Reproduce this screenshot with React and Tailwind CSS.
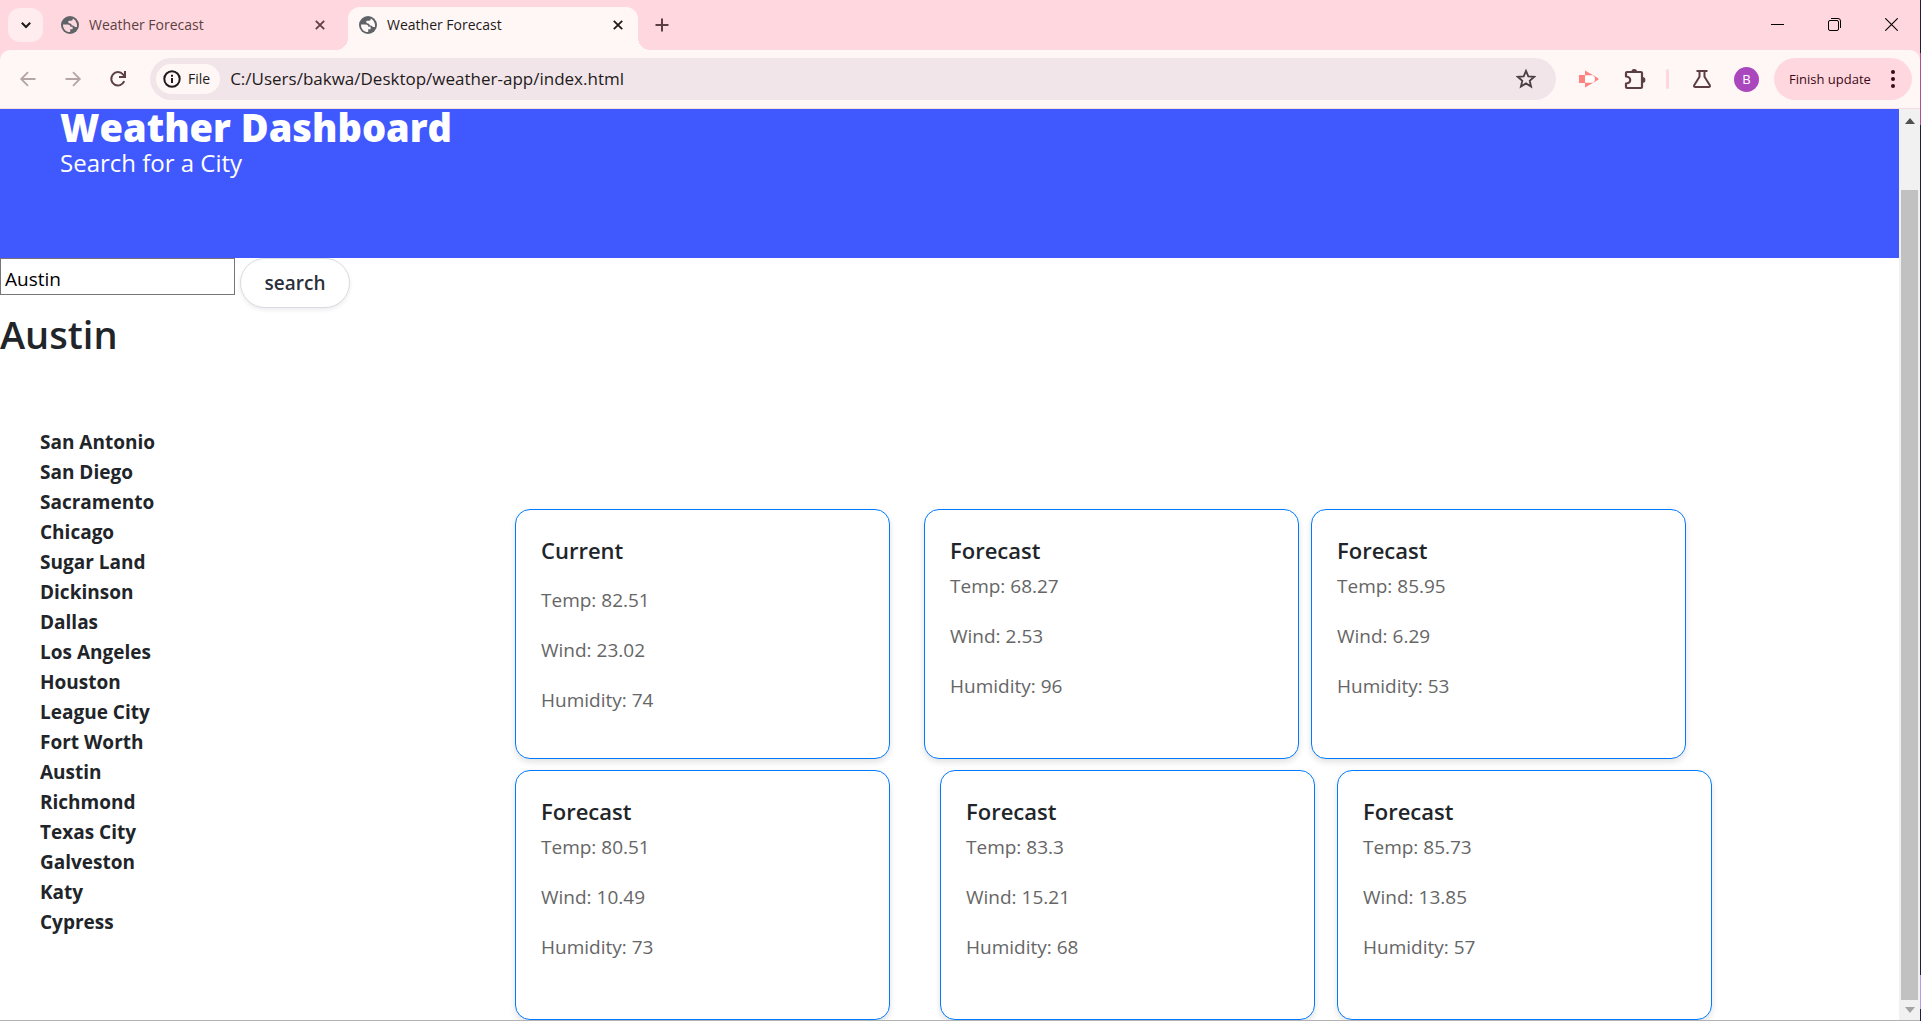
import React from "react";

const cities = [
  "San Antonio", "San Diego", "Sacramento", "Chicago", "Sugar Land", "Dickinson",
  "Dallas", "Los Angeles", "Houston", "League City", "Fort Worth", "Austin",
  "Richmond", "Texas City", "Galveston", "Katy", "Cypress",
];

function Glyph({ d, className, width = 2, box = 20, children }) {
  return (
    <svg viewBox={`0 0 ${box} ${box}`} className={className} fill="none" stroke="currentColor" strokeWidth={width} aria-hidden="true">
      {d && <path d={d} />}
      {children}
    </svg>
  );
}

function Globe({ light }) {
  return (
    <svg viewBox="0 0 18 18" className="size-[18px] shrink-0" aria-hidden="true">
      <circle cx="9" cy="9" r="9" fill="#5f6368" />
      <path
        fill={light}
        d="M2 8.6h4.6c1.6 0 2.6.9 2.8 2.2h2.2v2.4H9.2v2.9C5.2 16.300 2 13 2 9zM11.800 2.600c0 1.500-.6 2.200-1.600 2.200H8.600c-.8 0-1.400.5-1.400 1.300 0 .9.8 1.300 1.800 1.400 1.200.1 1.600.8 1.700 1.900.8.1 1.700-.1 2.300.5.4.5.600 1 1.600 1h1.300c.3-1.300.1-3-.6-4.400-.800-1.900-2-3-3.500-3.900z"
      />
    </svg>
  );
}

function Tab({ active }) {
  return (
    <div className={active
      ? "relative flex h-[43px] w-[290px] items-center rounded-t-xl bg-[#fff7f6] px-[11px] pb-[7px] text-[#1f1a1b]"
      : "flex h-[43px] w-[290px] items-center px-[11px] pb-[7px] text-[#5c3f43]"}>
      {active && <span className="absolute bottom-0 -left-3 size-3 bg-[radial-gradient(circle_at_0_0,transparent_12px,#fff7f6_12px)]" />}
      {active && <span className="absolute -right-3 bottom-0 size-3 bg-[radial-gradient(circle_at_100%_0,transparent_12px,#fff7f6_12px)]" />}
      <Globe light={active ? "#fff7f6" : "#ffd8df"} />
      <span className="ml-[10px] grow text-[14px] leading-[20px]">Weather Forecast</span>
      <button aria-label="Close tab" className="flex size-[18px] items-center justify-center">
        <Glyph box={10} className="size-[10px]" d="M.8.8l8.400 8.400M9.200.8L.8 9.200" width={1.8} />
      </button>
    </div>
  );
}

function TitleBar() {
  return (
    <div className="flex h-[50px] shrink-0 items-end bg-[#ffd8df]">
      <button aria-label="Search tabs" className="mr-[7px] mb-2 ml-2 flex h-[34px] w-[35px] items-center justify-center rounded-xl bg-[#ffecef] text-[#1f1a1b]">
        <Glyph box={10} className="size-[10px]" d="M.8 2.800L5 7l4.200-4.200" width={2} />
      </button>
      <Tab />
      <div className="w-2" />
      <Tab active />
      <button aria-label="New tab" className="mb-[15px] ml-[14px] flex size-5 items-center justify-center text-[#5c3f43]">
        <Glyph box={14} className="size-[14px]" d="M7 .5v13M.5 7h13" width={2} />
      </button>
      <div className="mb-[13px] ml-auto flex pr-[16px] text-black">
        <button aria-label="Minimize" className="mr-[32px] flex size-[25px] items-center justify-center">
          <Glyph box={13} className="size-[13px]" d="M0 6.500h13" width={1} />
        </button>
        <button aria-label="Restore" className="mr-[32px] flex size-[25px] items-center justify-center">
          <Glyph box={13} className="size-[13px]" width={1}>
            <rect x=".5" y="2.500" width="10" height="10" rx="1.500" />
            <path d="M3 .5h7a2.500 2.500 0 0 1 2.500 2.500v7" />
          </Glyph>
        </button>
        <button aria-label="Close" className="flex size-[25px] items-center justify-center">
          <Glyph box={13} className="size-[13px]" d="M.3.3l12.400 12.400M12.700.3L.3 12.700" width={1.1} />
        </button>
      </div>
    </div>
  );
}

function Toolbar() {
  return (
    <div className="shrink-0 bg-[#ffd8df]">
      <div className="flex h-[59px] items-center rounded-t-[10px] border-b border-[#f6dde0] bg-[#fff7f6] pr-2 pl-[18px] text-[#5c3f43]">
        <button aria-label="Back" className="text-[#b5a5a6]"><Glyph className="size-5" d="M17.500 10H4M10 3.200L3.200 10l6.800 6.800" width={1.8} /></button>
        <button aria-label="Forward" className="ml-[25px] text-[#b5a5a6]"><Glyph className="size-5" d="M2.500 10H16M10 3.200l6.800 6.800-6.800 6.800" width={1.8} /></button>
        <button aria-label="Reload" className="ml-[25px]">
          <Glyph className="size-5" d="M16.200 12.200A6.700 6.700 0 1 1 15 5.400L16.500 7M17 2v6h-6" width={2} />
        </button>
        <div className="ml-[22px] flex h-[42px] min-w-0 grow items-center rounded-full bg-[#f1e5e9] pr-[20px] pl-[6px] text-[#1f1a1b]">
          <button className="flex h-[30px] shrink-0 items-center rounded-full bg-[#fff7f6] pr-[10px] pl-[7px] text-[14px] leading-[20px]">
            <Glyph box={18} className="mr-[7px] size-[18px]" width={2}>
              <circle cx="9" cy="9" r="7.700" />
              <path d="M9 8v5M9 4.800v2" />
            </Glyph>
            File
          </button>
          <input aria-label="Address" defaultValue="C:/Users/bakwa/Desktop/weather-app/index.html" className="ml-[10px] min-w-0 grow bg-transparent text-[17px] leading-[24px] outline-none" />
          <button aria-label="Bookmark this page" className="text-[#4a4044]">
            <Glyph className="size-5" d="M10 1.800l2.300 5.500 5.900.5-4.500 3.900 1.400 5.800-5.100-3.100-5.100 3.100 1.400-5.800-4.500-3.900 5.900-.5z" width={1.8} />
          </button>
        </div>
        <button aria-label="Screen recorder" className="ml-[23px]">
          <svg viewBox="0 0 20 18" className="h-[18px] w-5" aria-hidden="true">
            <path d="M0 5h6v8H0z" fill="#ff8280" />
            <path d="M6 .5l8.500 5H6zM6 17.500l8.500-5H6zM14.500 5.200L20 9l-5.500 3.800z" fill="#ff8280" />
            <path d="M6.500 5.500h6a3.500 3.500 0 0 1 0 7h-6z" fill="#fff" />
          </svg>
        </button>
        <button aria-label="Extensions" className="ml-[25px]">
          <Glyph box={22} className="size-[22px]" width={2.200}>
            <path strokeLinejoin="round" d="M3 4h14a1 1 0 0 1 1 1v14a1 1 0 0 1-1 1H3a1 1 0 0 1-1-1v-3.500c3-.3 4.200-1.600 4.200-3.500S5 8.800 2 8.500V5a1 1 0 0 1 1-1z" />
            <path fill="currentColor" stroke="none" d="M7.300 3.800a2.900 2.900 0 0 1 5.800 0zM18.500 9a2.900 2.900 0 0 1 0 5.800z" />
          </Glyph>
        </button>
        <span className="ml-5 h-5 w-[3px] rounded-full bg-[#ffd8df]" />
        <button aria-label="Labs" className="ml-[23px]">
          <Glyph className="size-5" d="M4.500 2h11M7.500 2v5.800L2.200 16.300c-.5.900 0 1.700 1 1.700h13.600c1 0 1.500-.8 1-1.700L12.500 7.800V2" width={2} />
        </button>
        <button aria-label="Profile" className="ml-[22px] flex size-[25px] items-center justify-center rounded-full bg-[#ab47bc] text-[13px] leading-[20px] text-white">B</button>
        <button className="ml-[15px] flex h-[42px] w-[138px] shrink-0 items-center justify-between rounded-full bg-[#ffd8df] pr-[17px] pl-[15px] text-[13px] leading-[20px] whitespace-nowrap text-[#3d0715]">
          Finish update
          <svg viewBox="0 0 4 18" className="h-[18px] w-1" fill="currentColor" aria-hidden="true">
            <circle cx="2" cy="2" r="2" /><circle cx="2" cy="9" r="2" /><circle cx="2" cy="16" r="2" />
          </svg>
        </button>
      </div>
    </div>
  );
}

function Card({ title, temp, wind, humidity, roomy }) {
  return (
    <article className="h-[250px] w-[375px] shrink-0 rounded-[15px] border border-[#007bff] bg-white p-[25px] shadow-[0_3px_6px_rgba(0,0,0,0.12)]">
      <h2 className={roomy ? "mb-5 text-[22px] leading-[30px] font-semibold" : "mb-[6px] text-[22px] leading-[30px] font-semibold"}>{title}</h2>
      <div className="flex flex-col gap-5 text-[19px] leading-[30px] text-[#666]">
        <p>Temp: {temp}</p>
        <p>Wind: {wind}</p>
        <p>Humidity: {humidity}</p>
      </div>
    </article>
  );
}

function Dashboard() {
  return (
    <main className="min-w-0 grow overflow-hidden">
      <header className="h-[149px] bg-[#4059ff] pl-[60px] text-white">
        <h1 className="text-[38px] leading-[36px] font-extrabold">Weather Dashboard</h1>
        <p className="text-[24px] leading-[36px]">Search for a City</p>
      </header>
      <form className="flex h-[52px] items-start gap-[5px]" onSubmit={(e) => e.preventDefault()}>
        <input aria-label="City" defaultValue="Austin" className="h-[37px] w-[235px] border border-[#767676] px-1 pt-1 text-[19px] leading-[30px] text-black" />
        <button className="h-[50px] w-[110px] rounded-full border border-[#d9dbe3] bg-white text-[19px] leading-[24px] font-semibold text-[#2c2f3a] shadow-[0_2px_4px_rgba(0,0,0,0.08)]">search</button>
      </form>
      <h2 className="text-[38px] leading-[48px] font-semibold">Austin</h2>
      <div className="flex pt-[69px]">
        <ul className="w-[515px] shrink-0 px-10 text-[19px] leading-[30px] font-bold">
          {cities.map((c) => <li key={c}>{c}</li>)}
        </ul>
        <section className="flex flex-col gap-[11px] pt-[82px]">
          <div className="flex gap-3">
            <div className="mr-[22px]"><Card title="Current" temp="82.51" wind="23.02" humidity="74" roomy /></div>
            <Card title="Forecast" temp="68.27" wind="2.53" humidity="96" />
            <Card title="Forecast" temp="85.95" wind="6.29" humidity="53" />
          </div>
          <div className="flex gap-[22px]">
            <div className="mr-7"><Card title="Forecast" temp="80.51" wind="10.49" humidity="73" /></div>
            <Card title="Forecast" temp="83.3" wind="15.21" humidity="68" />
            <Card title="Forecast" temp="85.73" wind="13.85" humidity="57" />
          </div>
        </section>
      </div>
    </main>
  );
}

function Scrollbar() {
  return (
    <div className="flex w-[21px] shrink-0 flex-col items-center bg-[#f1f1f1]" aria-hidden="true">
      <svg viewBox="0 0 10 6" className="mt-[9px] h-[6px] w-[10px]" fill="#505050"><path d="M0 6l5-6 5 6z" /></svg>
      <div className="mt-[66px] mb-[7px] w-[17px] grow bg-[#c1c1c1]" />
      <svg viewBox="0 0 10 6" className="mb-[7px] h-[6px] w-[10px]" fill="#a3a3a3"><path d="M0 0l5 6 5-6z" /></svg>
    </div>
  );
}

export default function App() {
  return (
    <div className="flex h-screen overflow-hidden bg-white font-['Open_Sans','Noto_Sans',sans-serif] text-[#212529]">
      <div className="flex min-w-0 grow flex-col border-b border-[#b3b3b3]">
        <TitleBar />
        <Toolbar />
        <div className="flex min-h-0 grow">
          <Dashboard />
          <Scrollbar />
        </div>
      </div>
      <div className="flex w-px shrink-0 flex-col bg-[#1d2138]" aria-hidden="true">
        <div className="mt-[53px] h-[72px] bg-[#b0508c]" />
        <div className="mt-auto mb-[12px] h-[34px] bg-[#b79ae8]" />
      </div>
    </div>
  );
}
